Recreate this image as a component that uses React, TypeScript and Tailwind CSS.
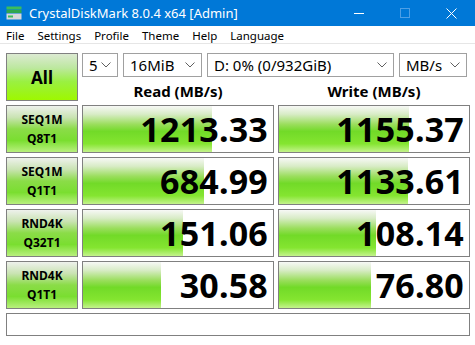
import React from "react";

type Row = {
    l1: string;
    l2: string;
    read: string;
    readBar: number;
    write: string;
    writeBar: number;
};

const rows: Row[] = [
    { l1: "SEQ1M", l2: "Q8T1", read: "1213.33", readBar: 129, write: "1155.37", writeBar: 130 },
    { l1: "SEQ1M", l2: "Q1T1", read: "684.99", readBar: 121, write: "1133.61", writeBar: 129 },
    { l1: "RND4K", l2: "Q32T1", read: "151.06", readBar: 100, write: "108.14", writeBar: 97 },
    { l1: "RND4K", l2: "Q1T1", read: "30.58", readBar: 78, write: "76.80", writeBar: 92 },
];

const font = "font-['Noto_Sans','Open_Sans',sans-serif]";

function Combo({ value, width }: { value: string; width: string }) {
    return (
        <div className={`${width} h-[24px] border border-[#a0a0a0] bg-white flex items-center justify-between pl-[6px] pr-[6px]`}>
            <span className="text-[15px] leading-none text-black">{value}</span>
            <svg width="10" height="6" viewBox="0 0 10 6" className="shrink-0">
                <path d="M0.5 0.5 L5 5 L9.5 0.5" fill="none" stroke="#606060" strokeWidth="1" />
            </svg>
        </div>
    );
}

function Cell({ value, bar }: { value: string; bar: number }) {
    return (
        <div className="relative w-[192px] h-[48px] border border-[#808080] bg-white overflow-hidden">
            <div
                className="absolute left-0 top-0 bottom-0 bg-[linear-gradient(to_bottom,#f7f8f6_0%,#d8ecc6_18%,#9ade5c_40%,#72da28_55%,#84e530_82%,#c4f38c_100%)]"
                style={{ width: bar }}
            />
            <div className="relative h-full flex items-center justify-end pr-[5px]">
                <span className="text-[34px] font-bold leading-none text-black tracking-[0.2px]">{value}</span>
            </div>
        </div>
    );
}

function Label({ l1, l2 }: { l1: string; l2: string }) {
    return (
        <div className="w-[72px] h-[48px] border border-[#808080] flex flex-col items-center justify-center bg-[linear-gradient(to_bottom,#eef1ec_0%,#c9e3b2_25%,#8bdc48_50%,#7ade30_75%,#b9f07e_100%)]">
            <span className="text-[12px] font-bold leading-[19px] text-black">{l1}</span>
            <span className="text-[12px] font-bold leading-[19px] text-black">{l2}</span>
        </div>
    );
}

export default function App() {
    return (
        <div className={`w-[475px] h-[345px] bg-white flex flex-col ${font}`}>
            {/* title bar */}
            <div className="h-[26px] bg-[#0078d7] flex items-center text-white">
                <svg width="16" height="14" viewBox="0 0 16 14" className="ml-[6px] mr-[7px]">
                    <rect x="0.5" y="0.5" width="15" height="3" fill="#3bbd5a" />
                    <rect x="0.5" y="4" width="15" height="3" fill="#2fa64d" />
                    <rect x="0.5" y="7.5" width="15" height="6" fill="#d8d8d8" />
                    <rect x="2" y="9.5" width="5" height="2" fill="#3bbd5a" />
                </svg>
                <span className="text-[13px] leading-none">CrystalDiskMark 8.0.4 x64 [Admin]</span>
                <div className="ml-auto mr-[1px] flex items-center h-full">
                    <div className="w-[46px] h-full flex items-center justify-center">
                        <div className="w-[10px] h-px bg-white" />
                    </div>
                    <div className="w-[46px] h-full flex items-center justify-center">
                        <div className="w-[10px] h-[10px] border border-[#4d9fe6]" />
                    </div>
                    <div className="w-[46px] h-full flex items-center justify-center">
                        <svg width="11" height="11" viewBox="0 0 11 11">
                            <path d="M0.5 0.5 L10.5 10.5 M10.5 0.5 L0.5 10.5" stroke="white" strokeWidth="1" />
                        </svg>
                    </div>
                </div>
            </div>

            {/* menu */}
            <div className="h-[18px] flex items-center gap-[13px] pl-[6px] pt-[2px] text-[11.5px] leading-none text-black border-b border-[#e6e6e6]">
                <span>File</span>
                <span>Settings</span>
                <span>Profile</span>
                <span>Theme</span>
                <span>Help</span>
                <span>Language</span>
            </div>

            <div className="flex flex-col pl-[6px] pt-[9px] gap-[4px]">
                {/* top row */}
                <div className="flex gap-[4px]">
                    <div className="w-[72px] h-[48px] border border-[#808080] flex items-center justify-center bg-[linear-gradient(to_bottom,#dcead2_0%,#bde8a0_30%,#9af042_60%,#9ef800_100%)]">
                        <span className="text-[17px] font-bold leading-none text-black">All</span>
                    </div>
                    <div className="flex flex-col">
                        <div className="flex gap-[5px]">
                            <Combo value="5" width="w-[36px]" />
                            <Combo value="16MiB" width="w-[79px]" />
                            <Combo value="D: 0% (0/932GiB)" width="w-[187px]" />
                            <Combo value="MB/s" width="w-[68px]" />
                        </div>
                        <div className="flex flex-1 items-center pt-[5px]">
                            <div className="w-[192px] text-center text-[15px] font-bold leading-none">Read (MB/s)</div>
                            <div className="w-[192px] ml-[4px] text-center text-[15px] font-bold leading-none">Write (MB/s)</div>
                        </div>
                    </div>
                </div>

                {rows.map((r, i) => (
                    <div key={i} className="flex gap-[4px]">
                        <Label l1={r.l1} l2={r.l2} />
                        <Cell value={r.read} bar={r.readBar} />
                        <Cell value={r.write} bar={r.writeBar} />
                    </div>
                ))}

                <div className="w-[464px] h-[23px] border border-[#808080] bg-white" />
            </div>
        </div>
    );
}
